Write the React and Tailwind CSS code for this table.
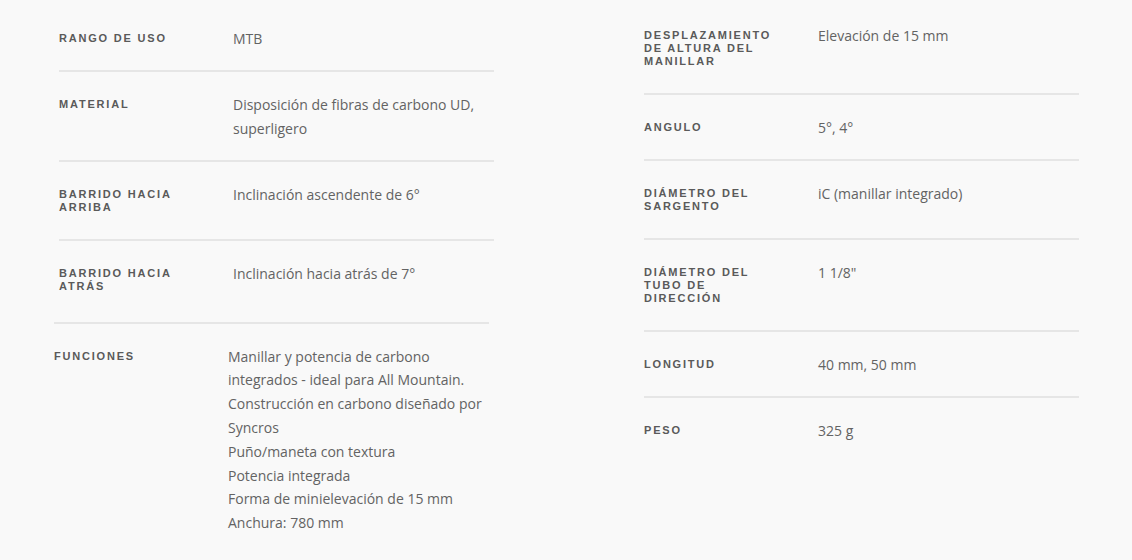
import React from 'react';

const leftSpecs = [
    { label: 'Rango de uso', value: 'MTB' },
    { label: 'Material', value: 'Disposición de fibras de carbono UD, superligero' },
    { label: 'Barrido hacia arriba', value: 'Inclinación ascendente de 6°' },
    { label: 'Barrido hacia atrás', value: 'Inclinación hacia atrás de 7°' },
];

const rightSpecs = [
    { label: 'Desplazamiento de altura del manillar', value: 'Elevación de 15 mm' },
    { label: 'Angulo', value: '5°, 4°' },
    { label: 'Diámetro del sargento', value: 'iC (manillar integrado)' },
    { label: 'Diámetro del tubo de dirección', value: '1 1/8"' },
    { label: 'Longitud', value: '40 mm, 50 mm' },
    { label: 'Peso', value: '325 g' },
];

const funciones = [
    'Manillar y potencia de carbono integrados - ideal para All Mountain.',
    'Construcción en carbono diseñado por Syncros',
    'Puño/maneta con textura',
    'Potencia integrada',
    'Forma de minielevación de 15 mm',
    'Anchura: 780 mm',
];

const SpecRow = ({ label, children, last }) => (
    <div className={`flex py-5 ${last ? '' : 'border-b-2 border-[#e6e6e6]'}`}>
        <div className="w-[174px] shrink-0 pr-[34px] pt-[6px] pb-[5px] font-['Liberation_Sans',Arial,sans-serif] text-[11px] font-bold uppercase leading-[13px] tracking-[1.8px] text-[#5a5a5a]">
            {label}
        </div>
        <div className="-mb-[1px] w-[261px] pt-[1px] font-['Open_Sans',sans-serif] text-[14px] leading-[1.7] text-[#636363]">
            {children}
        </div>
    </div>
);

const App = () => {
    return (
        <div className="min-h-[560px] w-[1132px] bg-[#f9f9f9]">
            <div className="flex items-start">
                <div className="ml-[54px] w-[440px] pt-[6px]">
                    <div className="pl-[5px]">
                        {leftSpecs.map((s, i) => (
                            <SpecRow key={s.label} label={s.label} last={i === leftSpecs.length - 1}>
                                {s.value}
                            </SpecRow>
                        ))}
                    </div>
                    <div className="mt-[4px] w-[435px] border-t-2 border-[#e6e6e6]">
                        <SpecRow label="Funciones" last>
                            {funciones.map((f) => (
                                <div key={f}>{f}</div>
                            ))}
                        </SpecRow>
                    </div>
                </div>
                <div className="ml-[150px] w-[435px] pt-[3px]">
                    {rightSpecs.map((s, i) => (
                        <SpecRow key={s.label} label={s.label} last={i === rightSpecs.length - 1}>
                            {s.value}
                        </SpecRow>
                    ))}
                </div>
            </div>
        </div>
    );
};

export default App;
